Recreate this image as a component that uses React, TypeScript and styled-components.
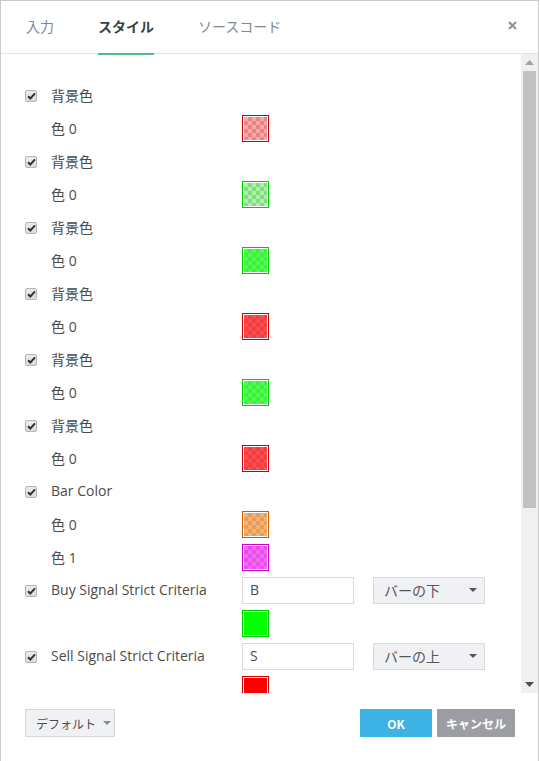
import React from 'react';
import styled, { createGlobalStyle } from 'styled-components';

const Global = createGlobalStyle`
  html, body { margin: 0; padding: 0; background: #fff; }
  body { font-family: "Open Sans", "Noto Sans CJK JP", sans-serif; color: #4c4c4c; }
  #root { width: 540px; height: 761px; }
`;

const Dialog = styled.div`
  box-sizing: border-box;
  width: 539px;
  height: 761px;
  border: 1px solid #c9cbcf;
  border-bottom: none;
  display: flex;
  flex-direction: column;
  background: #fff;
`;

const Header = styled.div`
  box-sizing: border-box;
  height: 53px;
  flex: none;
  border-bottom: 1px solid #e0e3e8;
  display: flex;
  align-items: flex-start;
  padding: 0 20px 0 25px;
`;

const Tab = styled.div<{ $active?: boolean }>`
  position: relative;
  box-sizing: border-box;
  height: 54px;
  margin-right: 44px;
  display: flex;
  align-items: center;
  font-family: "Noto Sans CJK JP", sans-serif;
  font-size: 14px;
  font-weight: ${(p) => (p.$active ? 700 : 400)};
  color: ${(p) => (p.$active ? '#3b3f47' : '#83878e')};
  border-bottom: 2px solid ${(p) => (p.$active ? '#53b987' : 'transparent')};
  padding-bottom: 2px;
`;

const Close = styled.button`
  margin-left: auto;
  margin-top: 19px;
  width: 11px;
  height: 11px;
  padding: 0;
  border: none;
  background: none;
  display: flex;
  align-items: center;
  justify-content: center;
  cursor: pointer;
`;

const Body = styled.div`
  flex: 1;
  min-height: 0;
  display: flex;
`;

const Viewport = styled.div`
  flex: 1;
  min-width: 0;
  overflow: hidden;
`;

const ScrollBar = styled.div`
  flex: none;
  width: 17px;
  background: #f0f0f0;
  display: flex;
  flex-direction: column;
`;

const ScrollArrow = styled.div`
  flex: none;
  height: 17px;
  display: flex;
  align-items: center;
  justify-content: center;
`;

const ScrollTrack = styled.div`
  flex: 1;
  min-height: 0;
  padding: 0 2px;
`;

const ScrollThumb = styled.div`
  background: #c1c1c1;
`;

const Content = styled.div`
  padding: 25px 0 167px;
`;

const Row = styled.div`
  display: flex;
  align-items: center;
  height: 33px;
  padding-left: 24px;
`;

const CheckCell = styled.div`
  width: 26px;
  flex: none;
  display: flex;
  align-items: center;
`;

const CheckBox = styled.span`
  box-sizing: border-box;
  width: 12px;
  height: 12px;
  border: 1px solid #b4b4b4;
  border-radius: 2px;
  background: linear-gradient(#ececec, #dcdcdc);
  display: flex;
  align-items: center;
  justify-content: center;
`;

const Label = styled.div`
  width: 191px;
  flex: none;
  font-size: 14px;
  color: #4c4c4c;
  white-space: nowrap;
  padding-bottom: 2px;
`;

const Swatch = styled.span<{ $border: string }>`
  box-sizing: border-box;
  width: 27px;
  height: 27px;
  border: 1px solid ${(p) => p.$border};
  padding: 1px;
  background: #fff;
  display: block;
`;

const SwatchFill = styled.span<{ $fill: string; $solid?: boolean }>`
  display: block;
  width: 100%;
  height: 100%;
  background-image: linear-gradient(${(p) => p.$fill}, ${(p) => p.$fill}),
    ${(p) =>
      p.$solid
        ? 'none'
        : 'conic-gradient(#cfcfcf 0 25%, #ffffff 0 50%, #cfcfcf 0 75%, #ffffff 0)'};
  background-size: auto, 8px 8px;
`;

const TextInput = styled.div`
  box-sizing: border-box;
  width: 112px;
  height: 27px;
  border: 1px solid #d9dadd;
  background: #fff;
  padding: 0 0 2px 7px;
  display: flex;
  align-items: center;
  font-size: 14px;
  color: #4c4c4c;
`;

const Select = styled.div`
  box-sizing: border-box;
  width: 112px;
  height: 27px;
  margin-left: 19px;
  border: 1px solid #d9dadd;
  background: #f0f1f5;
  padding: 0 7px 1px 10px;
  display: flex;
  align-items: center;
  justify-content: space-between;
  font-family: "Noto Sans CJK JP", sans-serif;
  font-size: 14px;
  color: #555;
`;

const Caret = styled.span<{ $color?: string }>`
  width: 0;
  height: 0;
  border-left: 4px solid transparent;
  border-right: 4px solid transparent;
  border-top: 4px solid ${(p) => p.$color || '#555'};
`;

const Footer = styled.div`
  flex: none;
  height: 68px;
  box-sizing: border-box;
  padding: 16px 23px 0 24px;
  display: flex;
  align-items: flex-start;
`;

const DefaultBtn = styled.div`
  box-sizing: border-box;
  width: 90px;
  height: 28px;
  border: 1px solid #d6d8dc;
  background: #f0f1f5;
  display: flex;
  align-items: center;
  padding-left: 10px;
  gap: 7px;
  font-family: "Noto Sans CJK JP", sans-serif;
  font-size: 12px;
  color: #4c4c4c;
`;

const Btn = styled.div<{ $bg: string; $w: number }>`
  width: ${(p) => p.$w}px;
  height: 28px;
  background: ${(p) => p.$bg};
  color: #fff;
  font-family: "Noto Sans CJK JP", sans-serif;
  font-weight: 700;
  font-size: 12px;
  display: flex;
  align-items: center;
  justify-content: center;
`;

const BtnGroup = styled.div`
  margin-left: auto;
  display: flex;
  gap: 5px;
`;

const Check = () => (
  <CheckBox>
    <svg width="9" height="8" viewBox="0 0 9 8">
      <path d="M1 4.2 L3.3 6.5 L8 1.3" fill="none" stroke="#333" strokeWidth="2" />
    </svg>
  </CheckBox>
);

type Sw = { border: string; fill: string; solid?: boolean };

const ColorSwatch = ({ s }: { s: Sw }) => (
  <Swatch $border={s.border}>
    <SwatchFill $fill={s.fill} $solid={s.solid} />
  </Swatch>
);

const bgItems: Sw[] = [
  { border: '#cc0000', fill: 'rgba(255,30,30,0.4)' },
  { border: '#00cc00', fill: 'rgba(30,230,30,0.4)' },
  { border: '#00cc00', fill: 'rgba(0,255,0,0.7)' },
  { border: '#cc0000', fill: 'rgba(255,0,0,0.7)' },
  { border: '#00cc00', fill: 'rgba(0,255,0,0.7)' },
  { border: '#cc0000', fill: 'rgba(255,0,0,0.7)' },
];

export default function App() {
  return (
    <>
      <Global />
      <Dialog>
        <Header>
          <Tab>入力</Tab>
          <Tab $active>スタイル</Tab>
          <Tab>ソースコード</Tab>
          <Close aria-label="close">
            <svg width="9" height="9" viewBox="0 0 9 9">
              <path d="M1 1 L8 8 M8 1 L1 8" stroke="#8d9198" strokeWidth="2" />
            </svg>
          </Close>
        </Header>
        <Body>
          <Viewport>
            <Content>
              {bgItems.map((s, i) => (
                <React.Fragment key={i}>
                  <Row>
                    <CheckCell><Check /></CheckCell>
                    <Label>背景色</Label>
                  </Row>
                  <Row>
                    <CheckCell />
                    <Label>色 0</Label>
                    <ColorSwatch s={s} />
                  </Row>
                </React.Fragment>
              ))}
              <Row>
                <CheckCell><Check /></CheckCell>
                <Label>Bar Color</Label>
              </Row>
              <Row>
                <CheckCell />
                <Label>色 0</Label>
                <ColorSwatch s={{ border: '#cc5a00', fill: 'rgba(245,125,20,0.6)' }} />
              </Row>
              <Row>
                <CheckCell />
                <Label>色 1</Label>
                <ColorSwatch s={{ border: '#cc00cc', fill: 'rgba(240,0,240,0.6)' }} />
              </Row>
              <Row>
                <CheckCell><Check /></CheckCell>
                <Label>Buy Signal Strict Criteria</Label>
                <TextInput>B</TextInput>
                <Select>バーの下<Caret /></Select>
              </Row>
              <Row>
                <CheckCell />
                <Label />
                <ColorSwatch s={{ border: '#00cc00', fill: '#00ff00', solid: true }} />
              </Row>
              <Row>
                <CheckCell><Check /></CheckCell>
                <Label>Sell Signal Strict Criteria</Label>
                <TextInput>S</TextInput>
                <Select>バーの上<Caret /></Select>
              </Row>
              <Row>
                <CheckCell />
                <Label />
                <ColorSwatch s={{ border: '#cc0000', fill: '#ff0000', solid: true }} />
              </Row>
            </Content>
          </Viewport>
          <ScrollBar>
            <ScrollArrow>
              <svg width="9" height="5" viewBox="0 0 9 5">
                <path d="M0 5 L4.5 0 L9 5 Z" fill="#a3a3a3" />
              </svg>
            </ScrollArrow>
            <ScrollTrack>
              <ScrollThumb style={{ height: 437 }} />
            </ScrollTrack>
            <ScrollArrow>
              <svg width="9" height="5" viewBox="0 0 9 5">
                <path d="M0 0 L9 0 L4.5 5 Z" fill="#505050" />
              </svg>
            </ScrollArrow>
          </ScrollBar>
        </Body>
        <Footer>
          <DefaultBtn>デフォルト<Caret $color="#8a8d93" /></DefaultBtn>
          <BtnGroup>
            <Btn $bg="#3cb3e4" $w={72}>OK</Btn>
            <Btn $bg="#9c9ea3" $w={78}>キャンセル</Btn>
          </BtnGroup>
        </Footer>
      </Dialog>
    </>
  );
}
